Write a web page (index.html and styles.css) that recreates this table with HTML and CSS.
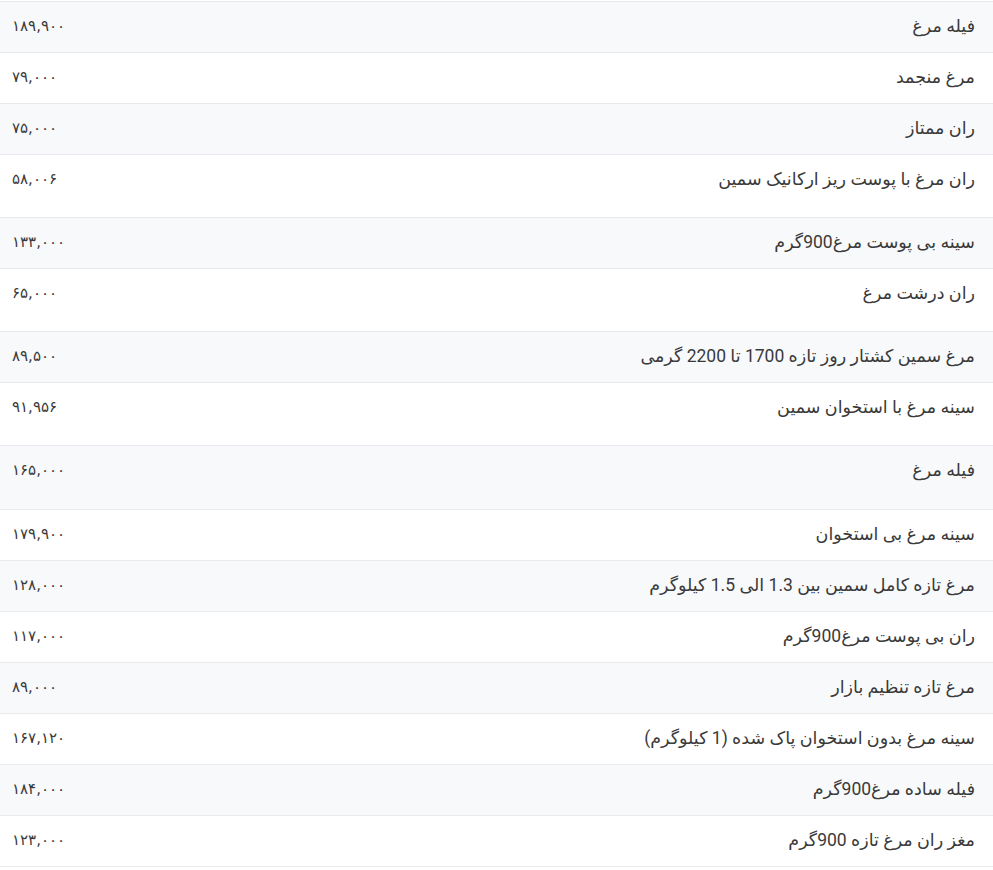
FILE: index.html
```html
<!DOCTYPE html>
<html lang="fa" dir="rtl">
<head>
<meta charset="utf-8">
<title>قیمت مرغ</title>
<link rel="stylesheet" href="styles.css">
</head>
<body>
<div class="wrap">
<table class="prices">
<tbody>
<tr><td class="name">فیله مرغ</td><td class="price">۱۸۹,۹۰۰</td></tr>
<tr><td class="name">مرغ منجمد</td><td class="price">۷۹,۰۰۰</td></tr>
<tr><td class="name">ران ممتاز</td><td class="price">۷۵,۰۰۰</td></tr>
<tr class="tall"><td class="name">ران مرغ با پوست ریز ارکانیک سمین</td><td class="price">۵۸,۰۰۶</td></tr>
<tr><td class="name">سینه بی پوست مرغ900گرم</td><td class="price">۱۳۳,۰۰۰</td></tr>
<tr class="tall"><td class="name">ران درشت مرغ</td><td class="price">۶۵,۰۰۰</td></tr>
<tr><td class="name">مرغ سمین کشتار روز تازه 1700 تا 2200 گرمی</td><td class="price">۸۹,۵۰۰</td></tr>
<tr class="tall"><td class="name">سینه مرغ با استخوان سمین</td><td class="price">۹۱,۹۵۶</td></tr>
<tr class="tall taller"><td class="name">فیله مرغ</td><td class="price">۱۶۵,۰۰۰</td></tr>
<tr><td class="name">سینه مرغ بی استخوان</td><td class="price">۱۷۹,۹۰۰</td></tr>
<tr><td class="name">مرغ تازه کامل سمین بین 1.3 الی 1.5 کیلوگرم</td><td class="price">۱۲۸,۰۰۰</td></tr>
<tr><td class="name">ران بی پوست مرغ900گرم</td><td class="price">۱۱۷,۰۰۰</td></tr>
<tr><td class="name">مرغ تازه تنظیم بازار</td><td class="price">۸۹,۰۰۰</td></tr>
<tr><td class="name">سینه مرغ بدون استخوان پاک شده (1 کیلوگرم)</td><td class="price">۱۶۷,۱۲۰</td></tr>
<tr><td class="name">فیله ساده مرغ900گرم</td><td class="price">۱۸۴,۰۰۰</td></tr>
<tr><td class="name">مغز ران مرغ تازه 900گرم</td><td class="price">۱۲۳,۰۰۰</td></tr>
</tbody>
</table>
</div>
</body>
</html>
```

FILE: styles.css
```css
html, body {
  margin: 0;
  padding: 0;
  background: #ffffff;
}
body {
  font-family: Roboto, "DejaVu Sans", sans-serif;
  font-size: 16px;
  color: #3a3a3a;
}
.wrap {
  padding-top: 1px;
}
.prices {
  width: 100%;
  border-collapse: collapse;
  border-bottom: 1px solid #e8eaed;
}
.prices td {
  border-top: 1px solid #e8eaed;
  padding: 11px 12px 13px;
  height: 26px;
  line-height: 26px;
  vertical-align: top;
}
.prices tr:nth-child(odd) td {
  background: #f8f9fa;
}
.prices td.name {
  text-align: right;
  padding-right: 18px;
  font-size: 17.5px;
}
.prices td.price {
  text-align: left;
  direction: ltr;
  width: 200px;
  font-family: "DejaVu Sans", sans-serif;
  font-size: 15px;
}
.prices tr.tall td {
  padding-bottom: 25px;
}
.prices tr.taller td {
  padding-bottom: 26px;
}
```
